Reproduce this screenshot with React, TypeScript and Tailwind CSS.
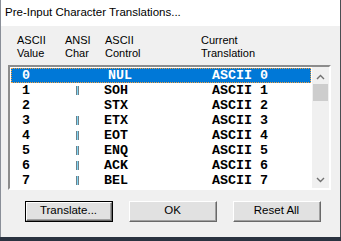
import React from "react";

const rows = [
  { v: "0", mark: false, c: "NUL", t: "ASCII 0" },
  { v: "1", mark: true, c: "SOH", t: "ASCII 1" },
  { v: "2", mark: false, c: "STX", t: "ASCII 2" },
  { v: "3", mark: true, c: "ETX", t: "ASCII 3" },
  { v: "4", mark: true, c: "EOT", t: "ASCII 4" },
  { v: "5", mark: true, c: "ENQ", t: "ASCII 5" },
  { v: "6", mark: true, c: "ACK", t: "ASCII 6" },
  { v: "7", mark: true, c: "BEL", t: "ASCII 7" },
];

function Btn({ label, def }: { label: string; def?: boolean }) {
  return (
    <div
      className={
        "w-[88px] h-[21px] " +
        (def ? "border border-black" : "")
      }
    >
      <div className="w-full h-full border-t border-l border-white border-r border-b border-r-[#696969] border-b-[#696969] bg-[#e1e1e1]">
        <div className="w-full h-full border-r border-b border-r-[#a0a0a0] border-b-[#a0a0a0] flex items-center justify-center text-[11.5px] text-black">
          {label}
        </div>
      </div>
    </div>
  );
}

function Chevron({ up }: { up?: boolean }) {
  return (
    <svg width="9" height="6" viewBox="0 0 9 6">
      <path
        d={up ? "M1 5 L4.5 1.5 L8 5" : "M1 1 L4.5 4.5 L8 1"}
        fill="none"
        stroke="#707070"
        strokeWidth="1.4"
      />
    </svg>
  );
}

export default function App() {
  return (
    <div
      className="w-[341px] h-[241px] flex flex-col bg-[#2a3340] overflow-hidden"
      style={{ fontFamily: '"Liberation Sans", Arial, sans-serif' }}
    >
      <div className="flex flex-col h-[237px] border-l border-l-[#8a8f98] border-r border-r-[#4a4d52]">
        <div className="h-[26px] bg-white flex items-center pl-[4px] text-[11.5px] text-black">
          Pre-Input Character Translations...
        </div>
        <div className="flex-1 bg-[#f0f0f0] flex flex-col">
          <div className="flex pt-[8px] pl-[16px] text-[11px] leading-[12.5px] text-black">
            <div className="w-[48px]">
              <div>ASCII</div>
              <div>Value</div>
            </div>
            <div className="w-[40px]">
              <div>ANSI</div>
              <div>Char</div>
            </div>
            <div className="w-[96px]">
              <div>ASCII</div>
              <div>Control</div>
            </div>
            <div>
              <div>Current</div>
              <div>Translation</div>
            </div>
          </div>
          <div className="mt-[6px] ml-[7px] w-[323px] h-[125px] border-t-2 border-l-2 border-t-[#8c8c8c] border-l-[#8c8c8c] border-b-2 border-r-2 border-b-white border-r-white bg-white flex">
            <div
              className="w-[302px] pl-[1px] pt-[1px] flex flex-col text-[13.33px] font-bold"
              style={{ fontFamily: '"Liberation Mono", "Courier New", monospace' }}
            >
              {rows.map((r, i) => {
                const sel = i === 0;
                return (
                  <div
                    key={i}
                    className={
                      "h-[15px] w-[300px] flex items-center leading-none " +
                      (sel
                        ? "bg-[#0078d7] text-white border border-dotted border-[#f0a040]"
                        : "text-black")
                    }
                  >
                    <div className={sel ? "w-[64px] pl-[10px]" : "w-[65px] pl-[11px]"}>{r.v}</div>
                    <div className="w-[28px] flex items-center">
                      {r.mark ? (
                        <div className="w-[3px] h-[9px] border-l border-r border-[#6f8088] bg-[#7fd6f5]" />
                      ) : null}
                    </div>
                    <div className={r.c === "NUL" ? "w-[108px] pl-[4px]" : "w-[108px]"}>{r.c}</div>
                    <div className="whitespace-pre">{r.t}</div>
                  </div>
                );
              })}
            </div>
            <div className="w-[17px] h-full bg-[#f0f0f0] flex flex-col">
              <div className="h-[17px] flex items-center justify-center pt-[2px]">
                <Chevron up />
              </div>
              <div className="h-[17px] mx-[1px] bg-[#cdcdcd]" />
              <div className="flex-1" />
              <div className="h-[17px] flex items-center justify-center">
                <Chevron />
              </div>
            </div>
          </div>
          <div className="flex mt-[11px] pl-[24px] gap-[16px]">
            <Btn label="Translate..." def />
            <Btn label="OK" />
            <Btn label="Reset All" />
          </div>
        </div>
      </div>
    </div>
  );
}
